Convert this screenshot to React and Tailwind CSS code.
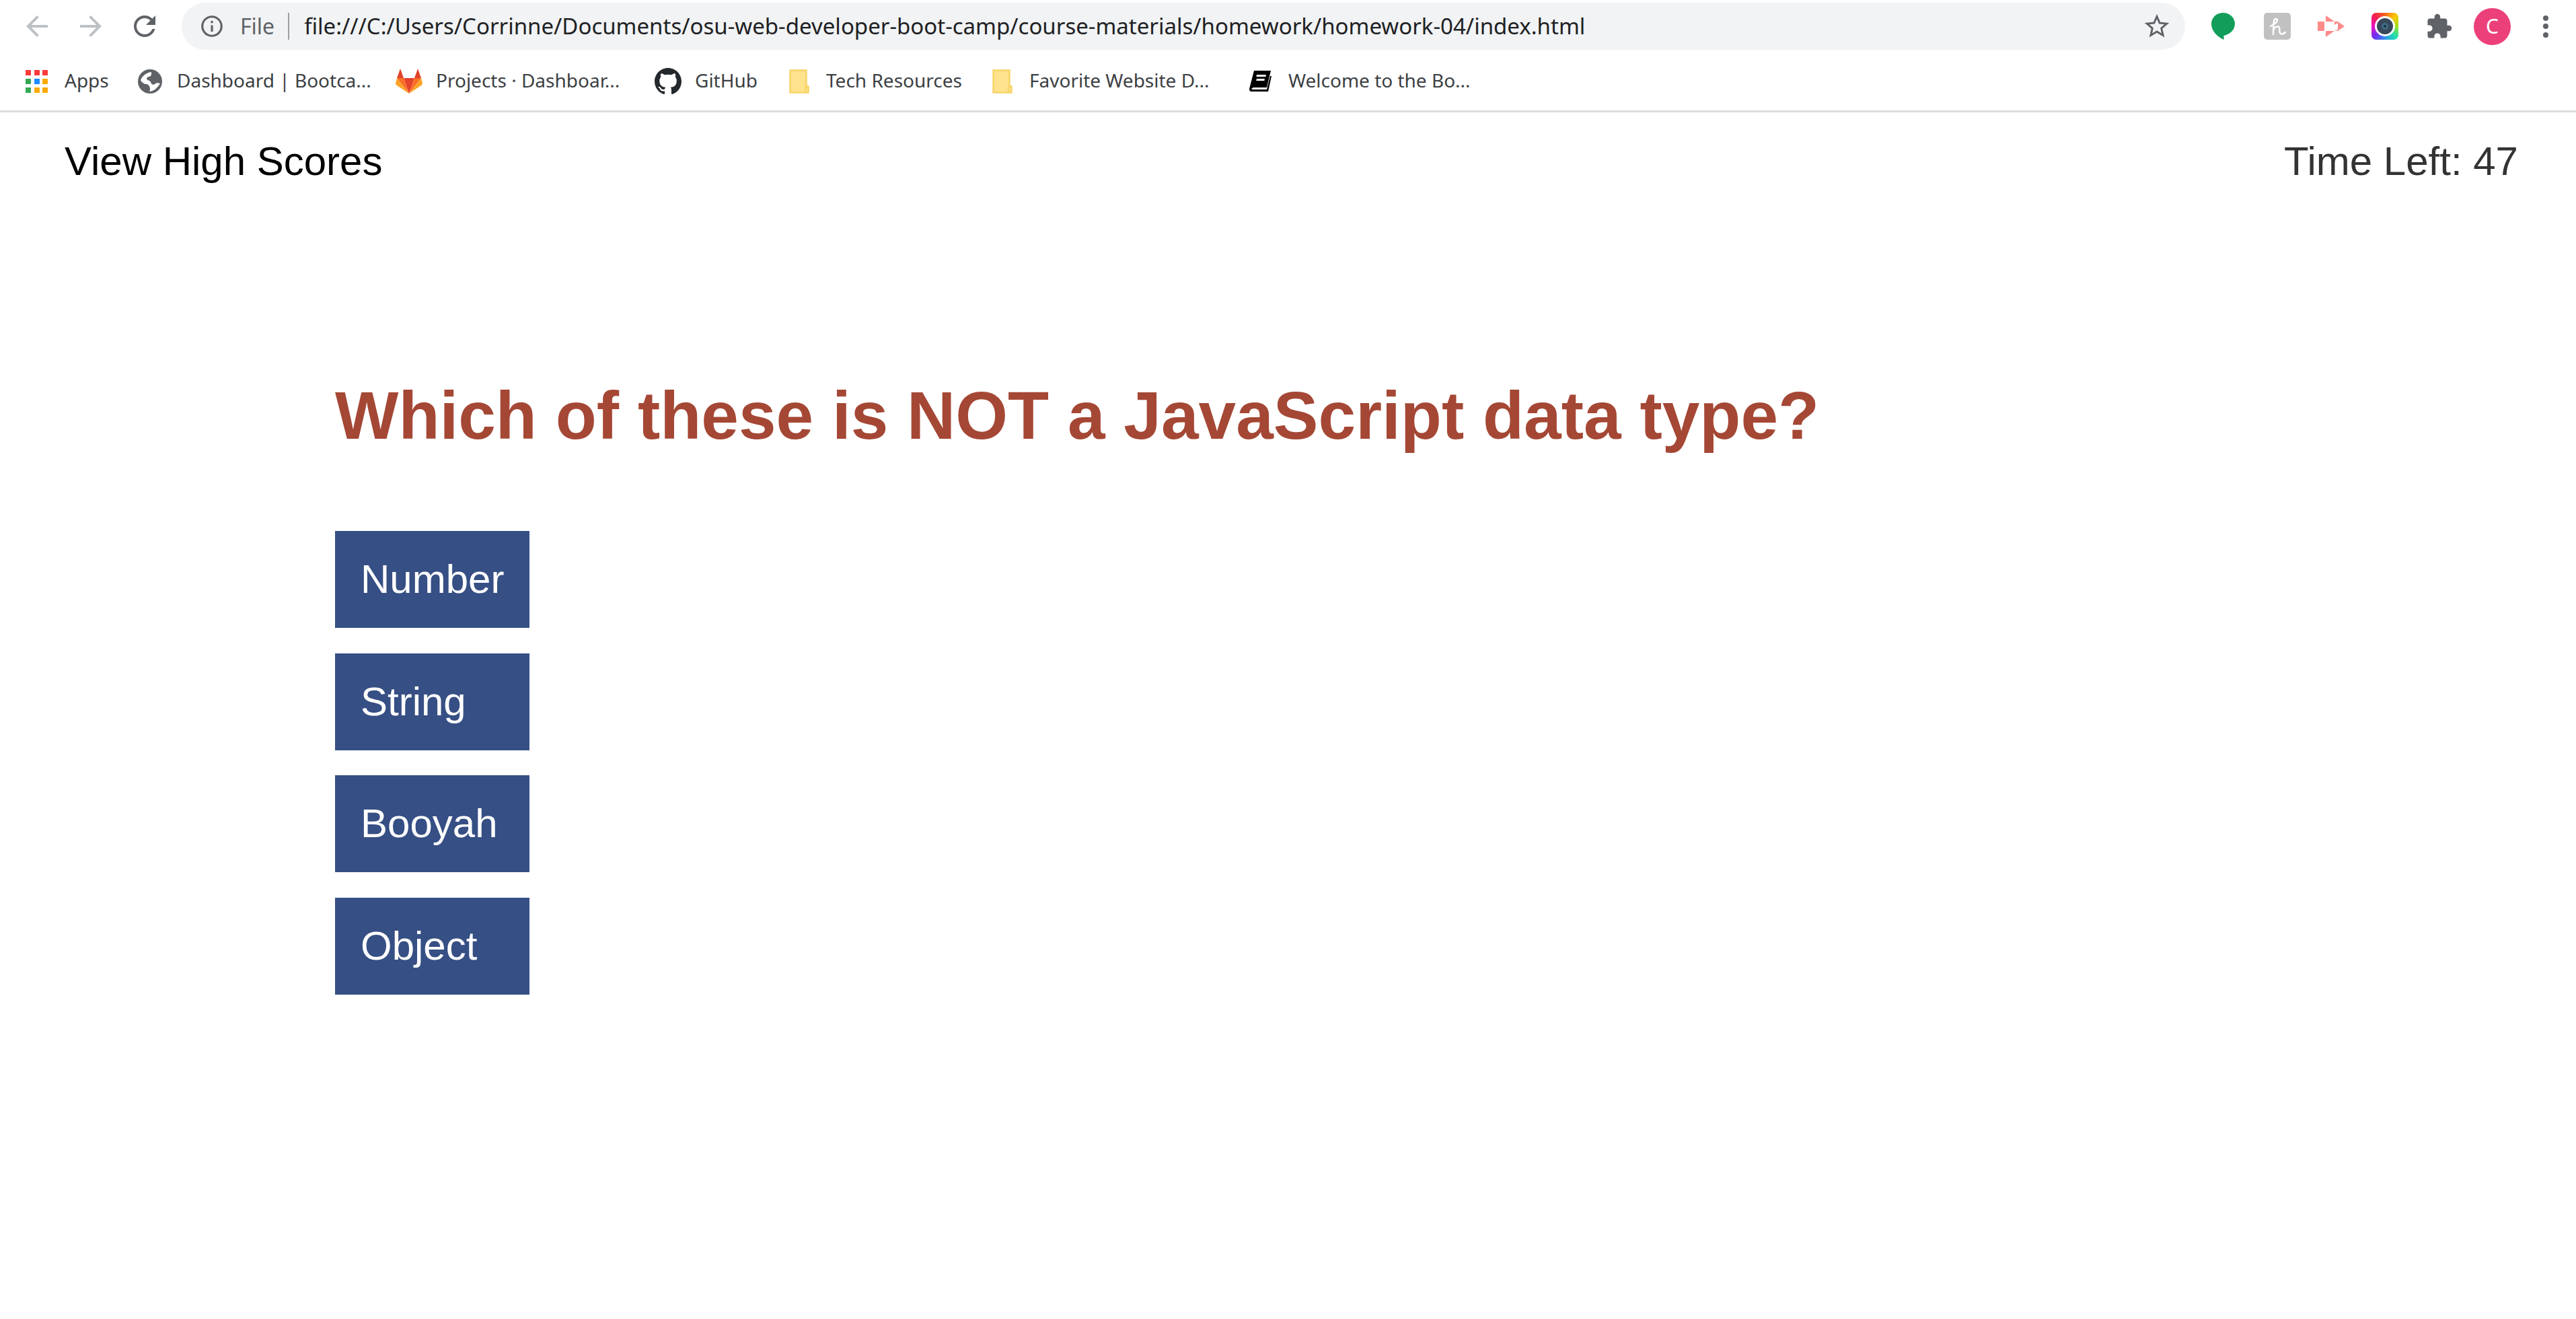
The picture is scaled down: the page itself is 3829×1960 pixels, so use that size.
import React from "react";

const Svg = ({ size, vb = "0 0 24 24", fill = "#5f6368", d }) => (
  <svg width={size} height={size} viewBox={vb} fill={fill} className="block shrink-0"><path d={d} /></svg>
);

const Folder = () => (
  <svg width="30" height="36" viewBox="0 0 30 36" className="block shrink-0">
    <path d="M1.5 1.5H25.5V26H28.5V34.5H1.5Z" fill="#fee28c" stroke="#f8d568" strokeWidth="2.5" />
    <path d="M24 34V26.5Q24 25 25.5 25H28.5" fill="none" stroke="#f8d568" strokeWidth="2.5" />
  </svg>
);

const Apps = () => {
  const colors = ["#fb3a3a", "#fb3a3a", "#fb3a3a", "#34a853", "#1a8cff", "#fbab00", "#34a853", "#fbab00", "#fbab00"];
  return (
    <div className="grid grid-cols-3 gap-[5px] w-[33px] shrink-0">
      {colors.map((c, i) => (
        <span key={i} className="block w-[8px] h-[8px]" style={{ backgroundColor: c }} />
      ))}
    </div>
  );
};

const Globe = () => (
  <svg width="36" height="36" viewBox="0 0 36 36" className="block shrink-0">
    <circle cx="18" cy="18" r="18" fill="#5f6368" />
    <path d="M20 4C13 5 7 9 4 16C6 20 10 22 13 22C15 22 17 24 18 28C18 30 18 32 17 33C23 33 29 28 33 21C30 20 27 20 25 22C22 24 20 22 19 19C18 16 14 17 13 14C13 11 17 11 19 10C20 8 20 6 20 4Z" fill="#fff" />
  </svg>
);

const GitLab = () => (
  <svg width="40" height="37" viewBox="0 0 40 37" className="block shrink-0">
    <path d="M7 0L2 14H12Z" fill="#e24329" />
    <path d="M33 0L38 14H28Z" fill="#e24329" />
    <path d="M12 14H28L20 37Z" fill="#e24329" />
    <path d="M2 14H12L20 37Z" fill="#fc6d26" />
    <path d="M38 14H28L20 37Z" fill="#fc6d26" />
    <path d="M2 14L0 22Q0 24 2 25L20 37Z" fill="#fca326" />
    <path d="M38 14L40 22Q40 24 38 25L20 37Z" fill="#fca326" />
  </svg>
);

const Book = () => (
  <svg width="33" height="31" viewBox="0 0 33 31" className="block shrink-0">
    <path d="M7 0H32L26 25H6L3 27Q3 28 6 28H26L31 8H33L28 31H3Q0 31 0 27Z" fill="#000" />
    <rect x="12" y="6" width="14" height="3" fill="#fff" transform="skewX(-10)" />
    <rect x="13" y="12" width="12" height="3" fill="#fff" transform="skewX(-10)" />
  </svg>
);

const Hangouts = () => (
  <svg width="35" height="40" viewBox="0 0 35 40" className="block shrink-0">
    <path d="M17.5 0C27 0 35 7 35 16.5C35 25 28 32 18.5 34V40C9 36 0 27 0 16.5C0 7 8 0 17.5 0Z" fill="#129e5a" />
  </svg>
);

const Honey = () => (
  <svg width="40" height="40" viewBox="0 0 40 40" fill="none" stroke="#fff" strokeWidth="2.5" strokeLinecap="round" className="block shrink-0">
    <rect x="0" y="0" width="40" height="40" rx="5" fill="#c1c1c1" stroke="none" />
    <path d="M10 20C14 18 21 14 20 10C19 8 15 9 15 13C14 18 14 25 14 32M14 26C16 20 22 19 23 22C24 25 22 29 25 31C27 32 30 31 32 29" />
  </svg>
);

const VideoArrow = () => (
  <svg width="40" height="32" viewBox="0 0 40 32" className="block shrink-0">
    <rect x="0" y="9" width="10" height="14" fill="#ff8a8a" />
    <path d="M12 0L25 9H12Z" fill="#ff8a8a" />
    <path d="M12 32L25 23H12Z" fill="#ff8a8a" />
    <path d="M25 9H30L40 16L30 23H25L30 21V11L25 14Z" fill="#ff8a8a" />
  </svg>
);

const Camera = () => (
  <div className="w-[40px] h-[40px] rounded-[7px] bg-[conic-gradient(#f5641e,#f9c800,#a0e020,#20e0b0,#3090f0,#7030f0,#f010c0,#f02050,#f5641e)] flex items-center justify-center shrink-0">
    <div className="w-[30px] h-[30px] rounded-full bg-white flex items-center justify-center">
      <div className="w-[24px] h-[24px] rounded-full bg-[#37495a] flex items-center justify-center">
        <div className="w-[10px] h-[10px] rounded-full bg-[#3f6d85] flex items-center justify-center">
          <div className="w-[4px] h-[4px] rounded-full bg-[#1c2f3d]" />
        </div>
      </div>
    </div>
  </div>
);

const Bookmark = ({ icon, label, w, gap }) => (
  <div className="flex items-center shrink-0">
    {icon}
    <span className="whitespace-nowrap text-[28px] leading-[36px] text-[#3c4043] mt-[-3px]" style={{ marginLeft: gap, width: w }}>{label}</span>
  </div>
);

const answers = ["Number", "String", "Booyah", "Object"];

export default function App() {
  return (
    <div className="min-h-[1960px] bg-white font-['Liberation_Sans',Arial,sans-serif]">
      <div className="font-['Noto_Sans',sans-serif]">
        <div className="h-[78px] flex items-center pl-[31px] pr-[33px]">
          <div className="w-[80px]"><Svg size={48} fill="#bdc1c6" d="M20 11H7.83l5.59-5.59L12 4l-8 8 8 8 1.41-1.41L7.83 13H20v-2z" /></div>
          <div className="w-[80px]"><Svg size={48} fill="#bdc1c6" d="M12 4l-1.41 1.41L16.17 11H4v2h12.17l-5.58 5.59L12 20l8-8z" /></div>
          <div className="w-[79px]"><Svg size={48} d="M17.65 6.35C16.2 4.9 14.21 4 12 4c-4.42 0-7.99 3.58-7.99 8s3.57 8 7.99 8c3.73 0 6.84-2.55 7.73-6h-2.08c-.82 2.33-3.04 4-5.65 4-3.31 0-6-2.69-6-6s2.69-6 6-6c1.66 0 3.14.69 4.22 1.78L13 11h7V4l-2.35 2.35z" /></div>
          <div className="h-[70px] w-[2978px] rounded-[35px] bg-[#f1f3f4] flex items-center pl-[26px] pr-[20px] shrink-0">
            <Svg size={38} d="M11 7h2v2h-2zm0 4h2v6h-2zm1-9C6.48 2 2 6.48 2 12s4.48 10 10 10 10-4.48 10-10S17.52 2 12 2zm0 18c-4.41 0-8-3.59-8-8s3.59-8 8-8 8 3.59 8 8-3.59 8-8 8z" />
            <span className="ml-[23px] text-[32px] leading-[40px] text-[#5f6368]">File</span>
            <div className="ml-[20px] w-[2px] h-[40px] bg-[#9aa0a6]" />
            <span className="ml-[22px] text-[33px] leading-[40px] text-[#202124] whitespace-nowrap">file:///C:/Users/Corrinne/Documents/osu-web-developer-boot-camp/course-materials/homework/homework-04/index.html</span>
            <div className="ml-auto"><Svg size={44} d="M22 9.24l-7.19-.62L12 2 9.19 8.63 2 9.24l5.46 4.73L5.82 21 12 17.27 18.18 21l-1.63-7.03L22 9.24zM12 15.4l-3.76 2.27 1-4.28-3.32-2.88 4.38-.38L12 6.1l1.71 4.04 4.38.38-3.32 2.88 1 4.28L12 15.4z" /></div>
          </div>
          <div className="ml-[39px] flex items-center">
            <div className="w-[78px]"><Hangouts /></div>
            <div className="w-[80px]"><Honey /></div>
            <div className="w-[80px]"><VideoArrow /></div>
            <div className="w-[80px]"><Camera /></div>
            <div className="w-[72px]"><Svg size={41} d="M20.5 11H19V7c0-1.1-.9-2-2-2h-4V3.5C13 2.12 11.88 1 10.5 1S8 2.12 8 3.5V5H4c-1.1 0-1.99.9-1.99 2v3.8H3.5c1.49 0 2.7 1.21 2.7 2.7s-1.21 2.7-2.7 2.7H2V20c0 1.1.9 2 2 2h3.8v-1.5c0-1.49 1.21-2.7 2.7-2.7 1.49 0 2.7 1.21 2.7 2.7V22H17c1.1 0 2-.9 2-2v-4h1.5c1.38 0 2.5-1.12 2.5-2.5S21.88 11 20.5 11z" /></div>
            <div className="w-[55px] h-[55px] rounded-full bg-[#ec407a] text-white text-[30px] leading-none flex items-center justify-center">C</div>
            <div className="ml-[48px] flex flex-col gap-[4.5px]">
              <span className="block w-[8px] h-[8px] rounded-full bg-[#5f6368]" />
              <span className="block w-[8px] h-[8px] rounded-full bg-[#5f6368]" />
              <span className="block w-[8px] h-[8px] rounded-full bg-[#5f6368]" />
            </div>
          </div>
        </div>
        <div className="box-content h-[85px] border-b-[3px] border-[#dadce0] flex items-center pl-[38px] pb-[1px]">
          <Bookmark icon={<Apps />} label="Apps" gap={25} w={109} />
          <Bookmark icon={<Globe />} label="Dashboard | Bootca..." gap={22} w={325} />
          <Bookmark icon={<GitLab />} label="Projects · Dashboar..." gap={20} w={325} />
          <Bookmark icon={<svg width="40" height="40" viewBox="0 0 16 16" fill="#24292e" className="block shrink-0"><path d="M8 0C3.58 0 0 3.58 0 8c0 3.54 2.29 6.53 5.47 7.59.4.07.55-.17.55-.38 0-.19-.01-.82-.01-1.49-2.01.37-2.53-.49-2.69-.94-.09-.23-.48-.94-.82-1.13-.28-.15-.68-.52-.01-.53.63-.01 1.08.58 1.23.82.72 1.21 1.87.87 2.33.66.07-.52.28-.87.51-1.07-1.78-.2-3.64-.89-3.64-3.95 0-.87.31-1.59.82-2.15-.08-.2-.36-1.02.08-2.12 0 0 .67-.21 2.2.82.64-.18 1.32-.27 2-.27.68 0 1.36.09 2 .27 1.53-1.04 2.2-.82 2.2-.82.44 1.1.16 1.92.08 2.12.51.56.82 1.27.82 2.15 0 3.07-1.87 3.75-3.65 3.95.29.25.54.73.54 1.48 0 1.07-.01 1.93-.01 2.2 0 .21.15.46.55.38A8.013 8.013 0 0016 8c0-4.42-3.58-8-8-8z" /></svg>} label="GitHub" gap={20} w={140} />
          <Bookmark icon={<Folder />} label="Tech Resources" gap={25} w={247} />
          <Bookmark icon={<Folder />} label="Favorite Website D..." gap={25} w={327} />
          <Bookmark icon={<Book />} label="Welcome to the Bo..." gap={25} w={280} />
        </div>
      </div>
      <div className="flex justify-between pl-[96px] pr-[86px] pt-[38px] text-[60px] leading-[70px]">
        <span className="text-black">View High Scores</span>
        <span className="text-[#333]">Time Left: 47</span>
      </div>
      <div className="pl-[498px] pt-[285px]">
        <h1 className="text-[100px] leading-[115px] font-bold text-[#a54735]">Which of these is NOT a JavaScript data type?</h1>
        <div className="mt-[114px] flex flex-col gap-[37.5px] items-start">
          {answers.map((a) => (
            <button key={a} className="w-[289px] h-[144px] bg-[#364f84] text-white text-[60px] text-left pl-[38px]">{a}</button>
          ))}
        </div>
      </div>
    </div>
  );
}
